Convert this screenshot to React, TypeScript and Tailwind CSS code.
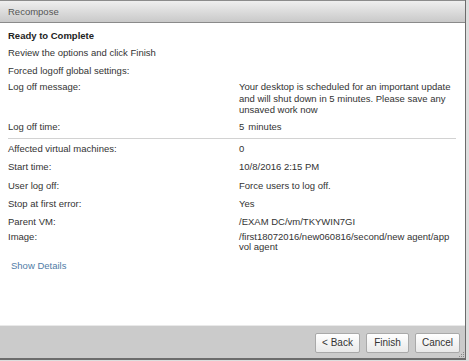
import React, { FC } from "react";

type Row = {
    label: string;
    value?: React.ReactNode;
    className?: string;
};

const Btn: FC<{ label: string; w: string }> = ({ label, w }) => (
    <button
        className={`${w} h-[20px] rounded-[2px] border border-[#a9a9a9] bg-gradient-to-b from-[#ffffff] to-[#e9e9e9] text-[#333] text-[10px] leading-[18px] flex items-center justify-center`}
    >
        {label}
    </button>
);

const RowLine: FC<Row> = ({ label, value, className }) => (
    <div className={`flex leading-[11.5px] ${className ?? ""}`}>
        <div className="w-[231px] shrink-0">{label}</div>
        <div className="flex-1">{value}</div>
    </div>
);

const App: FC = () => {
    return (
        <div className="w-[469px] h-[361px] bg-[#dedede] overflow-hidden" style={{ fontFamily: '"Liberation Sans", Arial, sans-serif' }}>
            <div className="w-[466px] h-[360px] flex flex-col bg-white border-r border-b-2 border-[#6c6c6c]">
                {/* title bar */}
                <div className="h-[23px] shrink-0 flex items-center px-[8px] border-t border-b border-t-[#8c8c8c] border-b-[#8a8a8a] bg-gradient-to-b from-[#efefef] to-[#c9c9c9]">
                    <span className="text-[#555] text-[9.5px] pt-[1px]">Recompose</span>
                </div>

                {/* body */}
                <div className="flex-1 flex flex-col px-[8px] text-[9.5px] text-[#333]">
                    <div className="mt-[7px] leading-[11.5px] font-bold text-[#222]">Ready to Complete</div>
                    <div className="mt-[5px] leading-[11.5px]">Review the options and click Finish</div>
                    <div className="mt-[6.5px] leading-[11.5px]">Forced logoff global settings:</div>
                    <RowLine
                        className="mt-[5px]"
                        label="Log off message:"
                        value={
                            <>
                                Your desktop is scheduled for an important update
                                <br />
                                and will shut down in 5 minutes. Please save any
                                <br />
                                unsaved work now
                            </>
                        }
                    />
                    <RowLine
                        className="mt-[5px]"
                        label="Log off time:"
                        value={
                            <>
                                <span>5</span>
                                <span className="ml-[4px]">minutes</span>
                            </>
                        }
                    />
                    <div className="mt-[6px] mr-[1px] h-px bg-[#d2d2d2]" />
                    <RowLine className="mt-[4px]" label="Affected virtual machines:" value="0" />
                    <RowLine className="mt-[6.5px]" label="Start time:" value="10/8/2016 2:15 PM" />
                    <RowLine className="mt-[7.5px]" label="User log off:" value="Force users to log off." />
                    <RowLine className="mt-[6.5px]" label="Stop at first error:" value="Yes" />
                    <RowLine className="mt-[6.5px]" label="Parent VM:" value="/EXAM DC/vm/TKYWIN7GI" />
                    <div className="mt-[4px] flex leading-[10.5px]">
                        <div className="w-[231px] shrink-0">Image:</div>
                        <div className="flex-1">
                            /first18072016/new060816/second/new agent/app
                            <br />
                            vol agent
                        </div>
                    </div>
                    <div className="mt-[7.5px] pl-[3px] leading-[11.5px] text-[#4f7ca6]">Show Details</div>
                </div>

                {/* footer */}
                <div className="h-[33px] shrink-0 relative flex items-center justify-end gap-[6px] pr-[5px] pt-[1px] border-t border-[#e9e9e9] bg-[#cbcbcb]">
                    <Btn label="< Back" w="w-[45px]" />
                    <Btn label="Finish" w="w-[43px]" />
                    <Btn label="Cancel" w="w-[45px]" />
                    <svg className="absolute right-0 bottom-0" width="7" height="7" viewBox="0 0 7 7">
                        <rect x="5" y="1" width="1" height="1" fill="#888" />
                        <rect x="3" y="3" width="1" height="1" fill="#888" />
                        <rect x="5" y="3" width="1" height="1" fill="#888" />
                        <rect x="1" y="5" width="1" height="1" fill="#888" />
                        <rect x="3" y="5" width="1" height="1" fill="#888" />
                        <rect x="5" y="5" width="1" height="1" fill="#888" />
                    </svg>
                </div>
            </div>
        </div>
    );
};

export default App;
